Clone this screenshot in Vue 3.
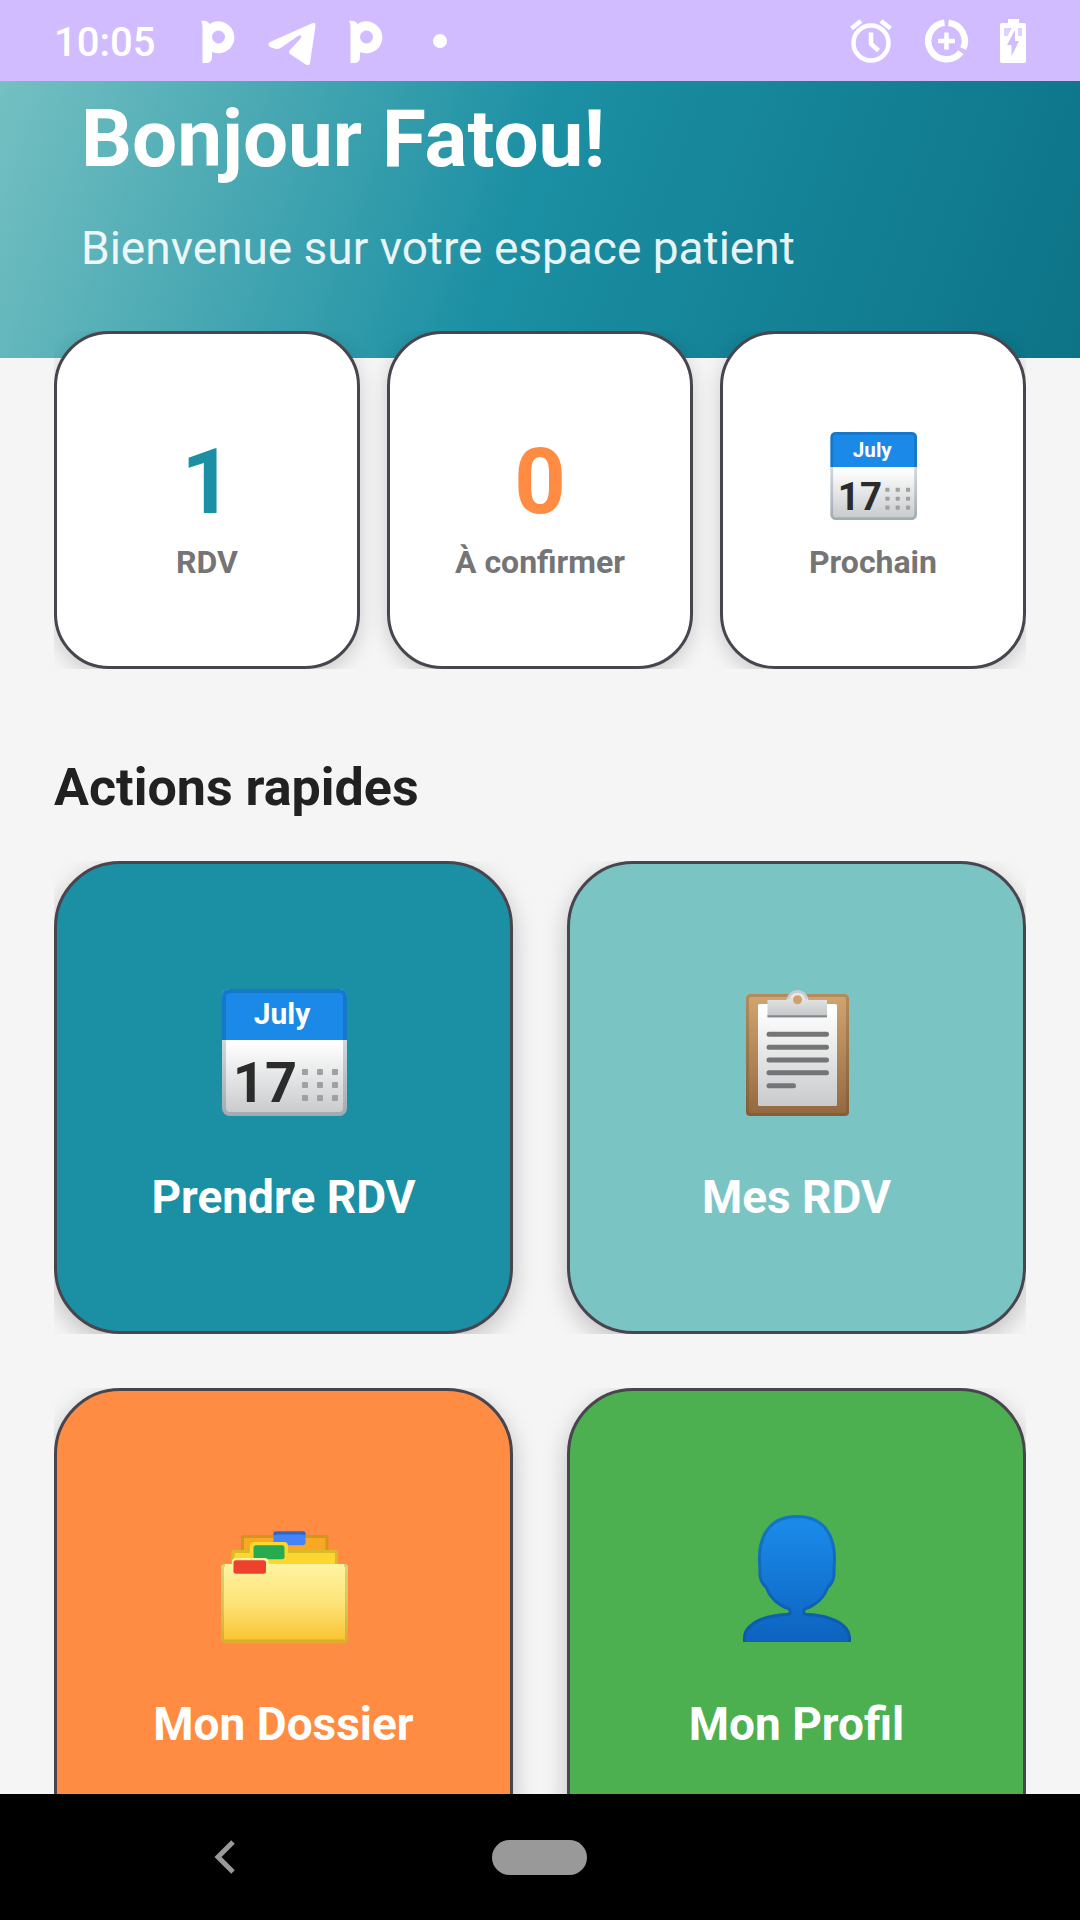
<script setup>
const stats = [
  { id: 'rdv', value: '1', label: 'RDV', tone: 'teal' },
  { id: 'confirm', value: '0', label: 'À confirmer', tone: 'orange' },
  { id: 'next', icon: 'calendar', label: 'Prochain' },
]

const actionRows = [
  [
    { id: 'book', icon: 'calendar', label: 'Prendre RDV', tone: 'bg-teal' },
    { id: 'list', icon: 'clipboard', label: 'Mes RDV', tone: 'bg-mint' },
  ],
  [
    { id: 'file', icon: 'folder', label: 'Mon Dossier', tone: 'bg-orange' },
    { id: 'profile', icon: 'person', label: 'Mon Profil', tone: 'bg-green' },
  ],
]
</script>

<template>
  <div class="screen">
    <!-- Gradients shared by the icons -->
    <svg class="defs" aria-hidden="true">
      <defs>
        <linearGradient id="page" x1="0" y1="0" x2="0" y2="1">
          <stop offset="0.42" stop-color="#ffffff" />
          <stop offset="1" stop-color="#c6c8ca" />
        </linearGradient>
        <linearGradient id="paper" x1="0" y1="0" x2="0" y2="1">
          <stop offset="0.05" stop-color="#ffffff" />
          <stop offset="1" stop-color="#c8cacc" />
        </linearGradient>
        <linearGradient id="board" x1="0" y1="0" x2="0" y2="1">
          <stop offset="0" stop-color="#d2a670" />
          <stop offset="1" stop-color="#936840" />
        </linearGradient>
        <linearGradient id="clip" x1="0" y1="0" x2="0" y2="1">
          <stop offset="0" stop-color="#f0f1f2" />
          <stop offset="1" stop-color="#c2c3c5" />
        </linearGradient>
        <linearGradient id="folder" x1="0" y1="0" x2="0" y2="1">
          <stop offset="0.1" stop-color="#fff3a0" />
          <stop offset="0.55" stop-color="#fce275" />
          <stop offset="1" stop-color="#f9c22d" />
        </linearGradient>
        <linearGradient id="person" x1="0" y1="0" x2="0" y2="1">
          <stop offset="0.1" stop-color="#1a89e8" />
          <stop offset="1" stop-color="#0d62be" />
        </linearGradient>
        <clipPath id="person-shape">
          <path d="M64 -1C39 -1 25 15 25 43C25 47 25.500 50 25.500 54C25 63 28 69 32 72C36 83 45 91 55 94Q57 97 54 97C28 98 10 108 10 122V126H118V122C118 108 100 98 74 97Q71 97 73 94C83 91 92 83 96 72C100 69 103 63 102.500 54C102.500 50 103 47 103 43C103 15 89 -1 64 -1Z" />
        </clipPath>
      </defs>
    </svg>

    <header class="status">
      <div class="status-left">
        <span class="time">10:05</span>
        <svg class="glyph" viewBox="0 0 48 48" aria-hidden="true">
          <path fill="#fff" fill-rule="evenodd" d="M7 4Q13 3 15.500 7A16 16 0 1 1 18 35V40Q18 46 12 46H8.500V11Q8.500 6 7 4ZM24.500 13.500A6.500 6.500 0 1 0 24.500 26.500A6.500 6.500 0 1 0 24.500 13.500Z" />
        </svg>
        <svg class="glyph" viewBox="0 0 48 48" aria-hidden="true">
          <path fill="#fff" d="M43.500 6.500Q48 4.500 47.500 9L42 46Q41 50 37 47L22 37Q20 35 22 33L33 21Q34 17 30 19L14 30Q10 33.500 5 31L2 30Q-1 27 2 25Z" />
        </svg>
        <svg class="glyph" viewBox="0 0 48 48" aria-hidden="true">
          <path fill="#fff" fill-rule="evenodd" d="M7 4Q13 3 15.500 7A16 16 0 1 1 18 35V40Q18 46 12 46H8.500V11Q8.500 6 7 4ZM24.500 13.500A6.500 6.500 0 1 0 24.500 26.500A6.500 6.500 0 1 0 24.500 13.500Z" />
        </svg>
        <svg class="glyph" viewBox="0 0 48 48" aria-hidden="true">
          <circle cx="24" cy="24" r="7" fill="#fff" />
        </svg>
      </div>
      <div class="status-right">
        <svg class="sys" viewBox="0 0 44 44" fill="none" stroke="#fff" aria-hidden="true">
          <circle cx="21" cy="24" r="17.500" stroke-width="4.500" />
          <path d="M1.500 9.500L11 2M31 2L40.500 9.500" stroke-width="4.500" />
          <path d="M21 13.500V25L28.500 31.500" stroke-width="4.500" />
        </svg>
        <svg class="sys" viewBox="0 0 44 44" fill="none" stroke="#fff" aria-hidden="true">
          <path d="M19.500 3.800A18.300 18.300 0 1 0 35.900 33.300M23.500 3.800A18.300 18.300 0 0 1 38.100 29.700" stroke-width="6.500" />
          <path d="M21.500 13.500V30.500M13 22H30" stroke-width="4.500" />
        </svg>
        <svg class="battery" viewBox="0 0 26 44" aria-hidden="true">
          <path fill="#fff" d="M8 0H19V4H24Q26 4 26 6V42Q26 44 24 44H2Q0 44 0 42V6Q0 4 2 4H8Z" />
          <path fill="#d0bcff" fill-opacity="0.7" d="M4 9H12L7.500 17H4ZM18 9H22V17H18Z" />
          <path fill="#d0bcff" d="M15 11V22H19L11.500 37V26H7Z" />
        </svg>
      </div>
    </header>

    <main class="content">
      <section class="hero">
        <h1>Bonjour Fatou!</h1>
        <p>Bienvenue sur votre espace patient</p>
      </section>

      <section class="stats">
        <article v-for="s in stats" :key="s.id" class="stat">
          <div class="stat-top">
            <svg v-if="s.icon" class="stat-icon" viewBox="0 0 128 128" role="img" aria-label="Calendrier">
              <rect x="2" y="0" width="126" height="128" rx="8" fill="url(#page)" />
              <path d="M2 51V8Q2 0 10 0H120Q128 0 128 8V51Z" fill="#1a89e8" />
              <rect x="4" y="2" width="122" height="124" rx="6" fill="none" stroke="#0b3550" stroke-opacity="0.2" stroke-width="4" />
              <text class="cal-month" x="63" y="36">July</text>
              <text class="cal-day" x="45" y="114">17</text>
              <g fill="#a0a0a0">
                <template v-for="x in [82, 97, 112]" :key="x">
                  <rect v-for="y in [81, 94, 107]" :key="y" :x="x" :y="y" width="6" height="6" rx="1" />
                </template>
              </g>
            </svg>
            <span v-else class="number" :class="s.tone">{{ s.value }}</span>
          </div>
          <span class="stat-label">{{ s.label }}</span>
        </article>
      </section>

      <h2>Actions rapides</h2>

      <div class="actions">
        <div v-for="(row, i) in actionRows" :key="i" class="action-row">
          <button v-for="a in row" :key="a.id" type="button" class="action" :class="a.tone">
            <svg v-if="a.icon === 'calendar'" class="action-icon" viewBox="0 0 128 128" aria-hidden="true">
              <rect x="2" y="0" width="125" height="127" rx="8" fill="url(#page)" />
              <path d="M2 51V8Q2 0 10 0H119Q127 0 127 8V51Z" fill="#1a89e8" />
              <rect x="4" y="2" width="121" height="123" rx="6" fill="none" stroke="#0b3550" stroke-opacity="0.2" stroke-width="4" />
              <text class="cal-month" x="62" y="35">July</text>
              <text class="cal-day" x="45" y="113">17</text>
              <g fill="#a0a0a0">
                <template v-for="x in [82, 97, 112]" :key="x">
                  <rect v-for="y in [80, 93, 106]" :key="y" :x="x" :y="y" width="6" height="6" rx="1" />
                </template>
              </g>
            </svg>

            <svg v-else-if="a.icon === 'clipboard'" class="action-icon" viewBox="0 0 128 128" aria-hidden="true">
              <rect x="13" y="5" width="103" height="122" rx="4" fill="url(#board)" />
              <rect x="14.500" y="6.500" width="100" height="119" rx="3" fill="none" stroke="#5c3b1c" stroke-opacity="0.25" stroke-width="3" />
              <rect x="25" y="15" width="79" height="102" rx="1.500" fill="url(#paper)" />
              <path d="M34.500 11H53.500A11.200 11.200 0 0 1 75.500 11H94V28.500H34.500Z" fill="url(#clip)" />
              <path d="M55 10A9.800 9.800 0 0 1 74 10" fill="none" stroke="#c9cbcd" stroke-width="3" />
              <path d="M34.500 27.200H94" stroke="#858688" stroke-width="2" />
              <circle cx="64.500" cy="10.700" r="4.500" fill="#cfa26c" />
              <path d="M36 45.300H93.500M36 58.200H93.500M36 71H93.500M36 83.800H93.500M36 96.700H60.500" stroke="#757575" stroke-width="5" stroke-linecap="round" />
            </svg>

            <svg v-else-if="a.icon === 'folder'" class="action-icon" viewBox="0 0 128 128" aria-hidden="true">
              <path d="M21 50V22Q21 19 24 19H105.500Q108.500 19 108.500 22V50Z" fill="#f9a825" />
              <path d="M22.500 34V20.500H107V34" fill="none" stroke="#7a6a10" stroke-opacity="0.3" stroke-width="3" stroke-linejoin="round" />
              <rect x="53.500" y="15.300" width="32" height="14" rx="3" fill="#4484f6" />
              <path d="M55 19V17H84V19" fill="none" stroke="#2f66c8" stroke-width="3" stroke-linejoin="round" />
              <path d="M11.500 62V36Q11.500 34 13.500 34H30V30Q30 26 34 26H64Q68 26 68 30V34H116Q118 34 118 36V62Z" fill="#fdd72f" />
              <path d="M13 48V35.500H30M68 35.500H116.500V48" fill="none" stroke="#8c7c10" stroke-opacity="0.3" stroke-width="3" stroke-linejoin="round" />
              <rect x="33.500" y="29.300" width="31" height="14" rx="2.500" fill="#27ab50" />
              <path d="M1 51Q1 48 4 48H12V46Q12 42 16 42H44.500Q48.500 42 48.500 46V48H125Q128 48 128 51V123.500Q128 126.700 125 126.700H4Q1 126.700 1 123.500Z" fill="url(#folder)" />
              <path d="M5 49.500H2.500V125H126.500V49.500H124" fill="none" stroke="#83831c" stroke-opacity="0.3" stroke-width="3" stroke-linejoin="round" />
              <rect x="13.500" y="44.300" width="32.500" height="13.500" rx="2.500" fill="#ee412e" />
            </svg>

            <svg v-else class="action-icon" viewBox="0 0 128 128" aria-hidden="true">
              <g clip-path="url(#person-shape)">
                <rect x="0" y="-2" width="128" height="130" fill="url(#person)" />
                <path d="M64 -1C39 -1 25 15 25 43C25 47 25.500 50 25.500 54C25 63 28 69 32 72C36 83 45 91 55 94Q57 97 54 97C28 98 10 108 10 122V130H118V122C118 108 100 98 74 97Q71 97 73 94C83 91 92 83 96 72C100 69 103 63 102.500 54C102.500 50 103 47 103 43C103 15 89 -1 64 -1Z" fill="none" stroke="#0a4a80" stroke-opacity="0.35" stroke-width="6" />
              </g>
            </svg>
            <span class="action-label">{{ a.label }}</span>
          </button>
        </div>
      </div>
    </main>

    <nav class="nav" aria-label="Navigation système">
      <button type="button" class="nav-btn" aria-label="Retour">
        <svg class="back" viewBox="0 0 22 36" aria-hidden="true">
          <path d="M19 3L4 18L19 33" fill="none" stroke="#999" stroke-width="5" />
        </svg>
      </button>
      <button type="button" class="nav-btn" aria-label="Accueil"><span class="pill"></span></button>
      <span></span>
    </nav>
  </div>
</template>

<style>
body {
  margin: 0;
}
</style>

<style scoped>
.screen {
  display: flex;
  flex-direction: column;
  height: 100vh;
  overflow: hidden;
  background: #f5f5f5;
  font-family: Roboto, "Liberation Sans", sans-serif;
}

.defs {
  position: absolute;
  width: 0;
  height: 0;
}

.screen * {
  box-sizing: border-box;
}

/* Status bar */
.status {
  display: flex;
  flex: none;
  align-items: center;
  justify-content: space-between;
  height: 81px;
  padding: 0 54px;
  background: #d0bcff;
  color: #fff;
}

.status-left {
  display: flex;
  align-items: center;
  gap: 26px;
}

.status-right {
  display: flex;
  align-items: center;
  gap: 31px;
}

.time {
  width: 114px;
  padding-top: 4px;
  font-size: 40px;
  line-height: 48px;
  font-weight: 500;
}

.glyph {
  width: 48px;
  height: 48px;
}

.sys {
  width: 44px;
  height: 44px;
}

.battery {
  width: 26px;
  height: 44px;
}

/* Scrolling content */
.content {
  flex: 1;
  min-height: 0;
  overflow-y: auto;
  scrollbar-width: none;
}

.hero {
  padding: 10px 81px 82px;
  background: linear-gradient(110deg, #7bc4c4, #1b8fa3 50%, #0d7387) bottom / 100% 400px;
  color: #fff;
}

h1,
h2,
p {
  margin: 0;
}

h1 {
  font-size: 80px;
  line-height: 96px;
  font-weight: 700;
}

.hero p {
  margin-top: 33px;
  font-size: 46px;
  line-height: 56px;
  opacity: 0.9;
}

.stats {
  display: flex;
  position: relative;
  gap: 27px;
  margin: -27px 54px 0;
  overflow: hidden;
}

.stat {
  display: flex;
  flex: 1 1 0;
  flex-direction: column;
  align-items: center;
  gap: 12px;
  padding: 98px 12px 84px;
  border: 3px solid #49454f;
  border-radius: 55px;
  background: #fff;
  box-shadow: 0 6px 20px rgba(0, 0, 0, 0.17);
}

.stat-top {
  height: 98px;
}

.stat-icon {
  display: block;
  width: 88px;
  height: 88px;
}

.number {
  display: block;
  font-size: 90px;
  line-height: 102px;
  font-weight: 700;
}

.teal {
  color: #1b8fa3;
}

.orange {
  color: #ff8c42;
}

.stat-label {
  color: #757575;
  font-size: 32px;
  line-height: 40px;
  font-weight: 700;
}

h2 {
  margin: 87px 54px 41px;
  color: #212121;
  font-size: 52px;
  line-height: 64px;
  font-weight: 700;
}

.actions {
  display: flex;
  flex-direction: column;
  gap: 54px;
  padding: 0 54px 54px;
}

.action-row {
  display: flex;
  gap: 54px;
  overflow: hidden;
}

.action {
  display: flex;
  flex: 1 1 0;
  flex-direction: column;
  align-items: center;
  gap: 52px;
  padding: 125px 12px 106px;
  border: 3px solid #49454f;
  border-radius: 66px;
  box-shadow: 0 8px 24px rgba(0, 0, 0, 0.22);
  color: #fff;
  font-family: inherit;
}

.action-icon {
  display: block;
  width: 128px;
  height: 128px;
  overflow: visible;
}

.action-label {
  font-size: 46px;
  line-height: 56px;
  font-weight: 700;
}

.bg-teal {
  background: #1b8fa3;
}

.bg-mint {
  background: #7bc4c4;
}

.bg-orange {
  background: #ff8c42;
}

.bg-green {
  background: #4caf50;
}

.cal-month,
.cal-day {
  font-weight: 700;
  text-anchor: middle;
}

.cal-month {
  fill: #fff;
  font-size: 30px;
}

.cal-day {
  fill: #2b2b2b;
  font-size: 56px;
}

/* System navigation bar */
.nav {
  display: grid;
  flex: none;
  grid-template-columns: repeat(3, 1fr);
  align-items: center;
  height: 126px;
  padding: 0 67px;
  background: #000;
}

.nav-btn {
  display: flex;
  align-items: center;
  justify-content: center;
  height: 100%;
  padding: 0;
  border: 0;
  background: none;
}

.back {
  width: 22px;
  height: 36px;
}

.pill {
  width: 95px;
  height: 35px;
  border-radius: 18px;
  background: #999;
}
</style>
